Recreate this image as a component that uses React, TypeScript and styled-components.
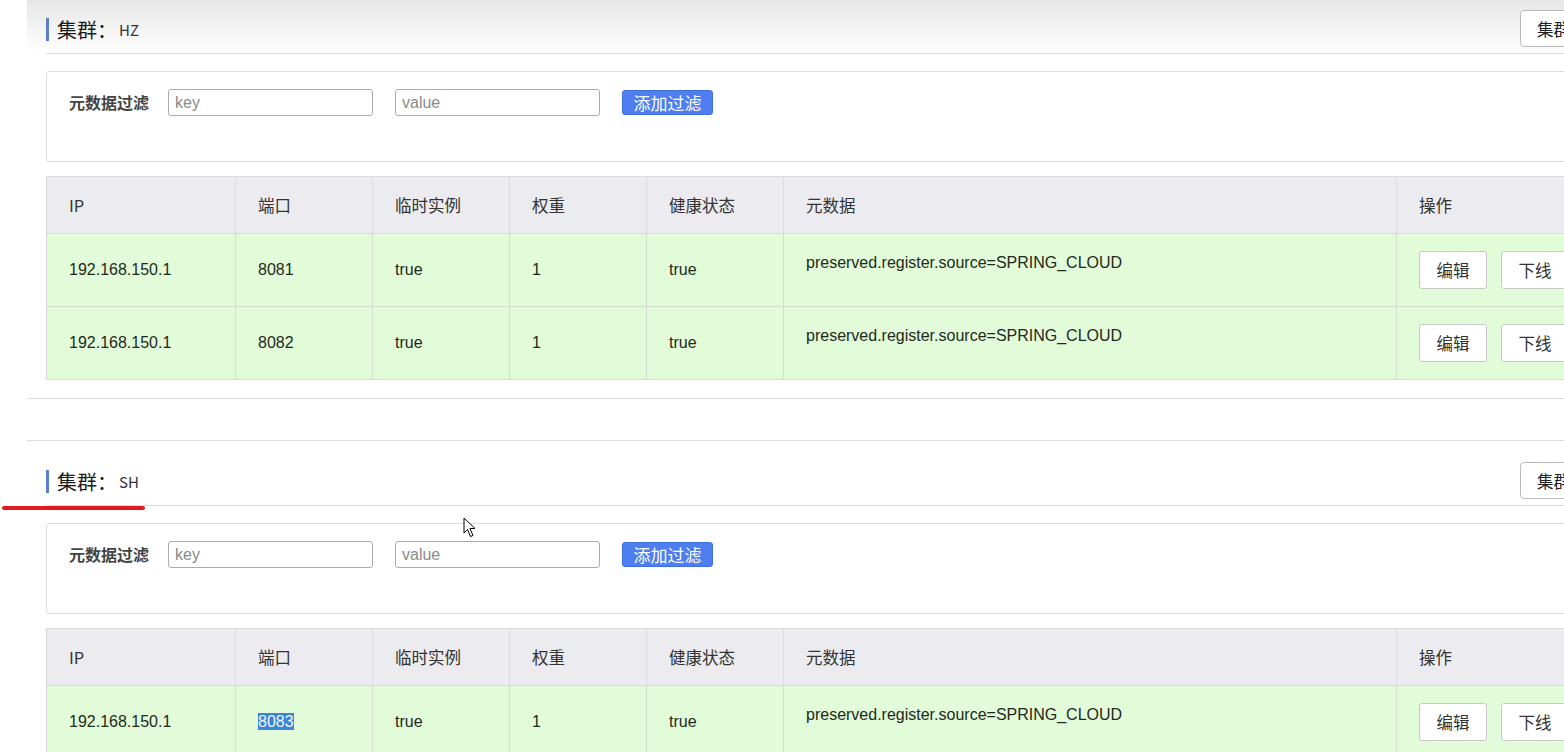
import React from 'react';
import styled, { createGlobalStyle } from 'styled-components';

const GlobalStyle = createGlobalStyle`
  html, body {
    margin: 0;
    padding: 0;
    background: #ffffff;
    overflow: hidden;
  }
  body {
    font-family: "Liberation Sans", "Noto Sans CJK SC", sans-serif;
    color: #222;
  }
  * {
    box-sizing: border-box;
  }
`;

const Page = styled.div`
  position: relative;
  width: 1680px;
  height: 752px;
  overflow: hidden;
  padding-left: 27px;
`;

// the page is scrolled a little, so the first section's top is above the frame
const Scroller = styled.div`
  position: relative;
  margin-top: -12px;
`;

const TopShade = styled.div`
  position: absolute;
  top: 0;
  left: 27px;
  right: 0;
  height: 52px;
  background: linear-gradient(#e6e6e6, rgba(255, 255, 255, 0));
  pointer-events: none;
`;

const Section = styled.section<{ $gap?: boolean }>`
  border-top: 1px solid #dcdcdc;
  border-bottom: 1px solid #dcdcdc;
  padding: 0 0 18px 19px;
  margin-top: ${p => (p.$gap ? '41px' : '0')};
`;

const TitleRow = styled.div`
  position: relative;
  display: flex;
  align-items: center;
  justify-content: space-between;
  height: 48px;
  margin-top: 17px;
  border-bottom: 1px solid #dcdcdc;
  padding-right: 60px;
`;

const Title = styled.div`
  display: flex;
  align-items: center;
  border-left: 3px solid #5b7fcf;
  height: 23px;
  padding-left: 8px;
  font-family: "Noto Sans CJK SC", sans-serif;
  font-size: 20px;
  color: #1a1a1a;
`;

const TitleName = styled.span`
  font-size: 15px;
  margin-left: 2px;
  color: #333;
`;

const Underline = styled.div`
  position: absolute;
  left: -44px;
  bottom: -5px;
  width: 143px;
  height: 4px;
  border-radius: 2px;
  background: #e3191c;
`;

const ClusterButton = styled.button`
  height: 37px;
  margin-top: -2px;
  padding: 0 16px;
  background: #fff;
  border: 1px solid #bbb;
  border-radius: 4px;
  font-family: "Noto Sans CJK SC", sans-serif;
  font-size: 16.5px;
  color: #222;
`;

const FilterBox = styled.div`
  margin-top: 17px;
  height: 91px;
  border: 1px solid #dcdcdc;
  border-radius: 3px;
  padding: 17px 0 0 22px;
  display: flex;
  align-items: flex-start;
  background: #fff;
`;

const FilterLabel = styled.span`
  font-family: "Noto Sans CJK SC", sans-serif;
  font-weight: 700;
  font-size: 16px;
  color: #444;
  line-height: 27px;
  width: 99px;
`;

const Input = styled.input`
  width: 205px;
  height: 27px;
  margin-right: 22px;
  border: 1px solid #aaa;
  border-radius: 3px;
  padding: 0 6px;
  font-family: "Liberation Sans", sans-serif;
  font-size: 16px;
  color: #333;
  background: #fff;
  &::placeholder {
    color: #8a8a8a;
  }
`;

const PrimaryButton = styled.button`
  height: 25px;
  width: 91px;
  margin-top: 1px;
  border: 1px solid #3f6edf;
  border-radius: 3px;
  background: #4e7ef0;
  color: #fff;
  font-family: "Noto Sans CJK SC", sans-serif;
  font-size: 17px;
  line-height: 22px;
  padding: 0;
`;

const Table = styled.table`
  margin-top: 14px;
  width: 100%;
  border-collapse: collapse;
  table-layout: fixed;
  border-top: 1px solid #dcdcdc;
  border-left: 1px solid #d5dbd4;
`;

const HeadCell = styled.th<{ $w?: number }>`
  width: ${p => (p.$w ? `${p.$w}px` : 'auto')};
  height: 57px;
  background: #ebebf0;
  border-right: 1px solid #dadae0;
  border-bottom: 1px solid #d6dcd5;
  text-align: left;
  padding: 0 0 0 22px;
  font-family: "Noto Sans CJK SC", sans-serif;
  font-weight: 400;
  font-size: 16.5px;
  color: #333;
`;

const Row = styled.tr`
  background: #e2fbd9;
`;

const Cell = styled.td<{ $top?: boolean }>`
  height: 73px;
  border-right: 1px solid #d2dccf;
  border-bottom: 1px solid #d2dccf;
  padding: ${p => (p.$top ? '20px 0 0 22px' : '0 0 0 22px')};
  vertical-align: ${p => (p.$top ? 'top' : 'middle')};
  font-size: 16px;
  color: #1e2a1c;
`;

const Selected = styled.span`
  background: #3a86d6;
  color: #f2f6ff;
`;

const Actions = styled.div`
  display: flex;
  gap: 14px;
`;

const RowButton = styled.button`
  width: 68px;
  height: 38px;
  background: #fff;
  border: 1px solid #c8c8c8;
  border-radius: 3px;
  font-family: "Noto Sans CJK SC", sans-serif;
  font-size: 16.5px;
  color: #333;
  padding: 0;
`;

const Cursor = styled.svg`
  position: absolute;
  left: 463px;
  top: 517px;
  pointer-events: none;
`;

type Instance = { ip: string; port: string; selected?: boolean };

const columns: { label: string; w?: number }[] = [
  { label: 'IP', w: 189 },
  { label: '端口', w: 137 },
  { label: '临时实例', w: 137 },
  { label: '权重', w: 137 },
  { label: '健康状态', w: 137 },
  { label: '元数据', w: 613 },
  { label: '操作' },
];

const ClusterSection: React.FC<{ name: string; rows: Instance[]; gap?: boolean; marked?: boolean }> = ({
  name,
  rows,
  gap,
  marked,
}) => (
  <Section $gap={gap}>
    <TitleRow>
      <Title>
        集群：<TitleName>{name}</TitleName>
      </Title>
      <ClusterButton>集群配置</ClusterButton>
      {marked && <Underline />}
    </TitleRow>

    <FilterBox>
      <FilterLabel>元数据过滤</FilterLabel>
      <Input placeholder="key" />
      <Input placeholder="value" />
      <PrimaryButton>添加过滤</PrimaryButton>
    </FilterBox>

    <Table>
      <thead>
        <tr>
          {columns.map(c => (
            <HeadCell key={c.label} $w={c.w}>
              {c.label}
            </HeadCell>
          ))}
        </tr>
      </thead>
      <tbody>
        {rows.map(r => (
          <Row key={r.port}>
            <Cell>{r.ip}</Cell>
            <Cell>{r.selected ? <Selected>{r.port}</Selected> : r.port}</Cell>
            <Cell>true</Cell>
            <Cell>1</Cell>
            <Cell>true</Cell>
            <Cell $top>preserved.register.source=SPRING_CLOUD</Cell>
            <Cell>
              <Actions>
                <RowButton>编辑</RowButton>
                <RowButton>下线</RowButton>
              </Actions>
            </Cell>
          </Row>
        ))}
      </tbody>
    </Table>
  </Section>
);

const App: React.FC = () => (
  <Page>
    <GlobalStyle />
    <TopShade />
    <Scroller>
      <ClusterSection
        name="HZ"
        rows={[
          { ip: '192.168.150.1', port: '8081' },
          { ip: '192.168.150.1', port: '8082' },
        ]}
      />
      <ClusterSection name="SH" gap marked rows={[{ ip: '192.168.150.1', port: '8083', selected: true }]} />
    </Scroller>
    <Cursor width="14" height="21" viewBox="0 0 14 21">
      <path d="M1 1 L1 16 L4.5 12.5 L7.5 19.5 L10 18.5 L7 11.5 L12 11.5 Z" fill="#fff" stroke="#000" strokeWidth="1" strokeLinejoin="round" />
    </Cursor>
  </Page>
);

export default App;
